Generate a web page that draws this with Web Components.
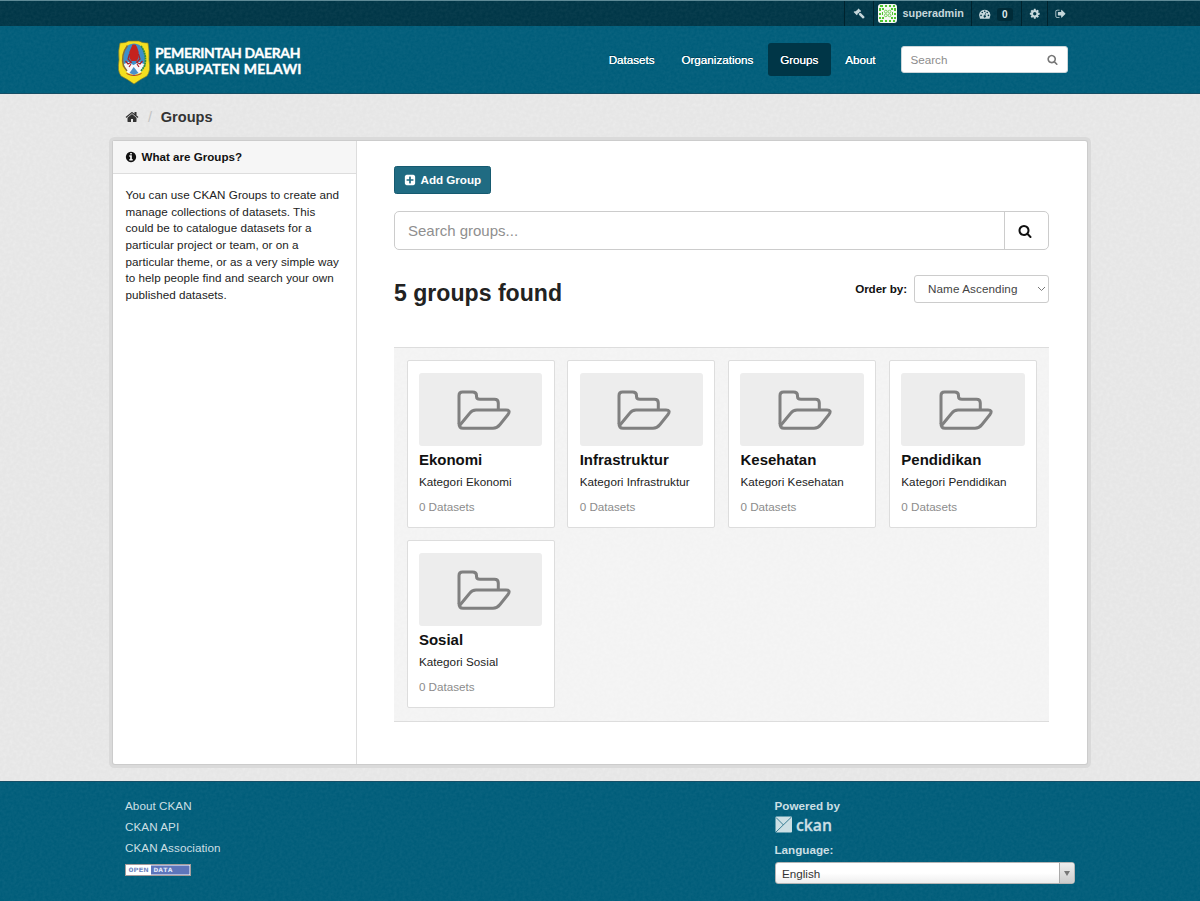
<!DOCTYPE html>
<html lang="en">
<head>
<meta charset="utf-8">
<title>Groups - CKAN</title>
<style>
:root{
  --grain:url("data:image/svg+xml,%3Csvg xmlns='http://www.w3.org/2000/svg' width='120' height='120'%3E%3Cfilter id='n' x='0' y='0' width='100%25' height='100%25'%3E%3CfeTurbulence type='fractalNoise' baseFrequency='.35' numOctaves='2' stitchTiles='stitch'/%3E%3CfeColorMatrix values='0 0 0 0 1 0 0 0 0 1 0 0 0 0 1 .35 0 0 0 -.1'/%3E%3C/filter%3E%3Crect width='120' height='120' filter='url(%23n)' opacity='.2'/%3E%3C/svg%3E");
  --speckle:url("data:image/svg+xml,%3Csvg xmlns='http://www.w3.org/2000/svg' width='120' height='120'%3E%3Cfilter id='n' x='0' y='0' width='100%25' height='100%25'%3E%3CfeTurbulence type='fractalNoise' baseFrequency='.3' numOctaves='2' stitchTiles='stitch'/%3E%3CfeColorMatrix values='0 0 0 0 1 0 0 0 0 1 0 0 0 0 1 1.4 0 0 0 -.5'/%3E%3C/filter%3E%3Crect width='120' height='120' filter='url(%23n)' opacity='.28'/%3E%3C/svg%3E");
}
body{margin:0;background:#005d7a;font:11.667px/16.667px "Liberation Sans",Arial,sans-serif;color:#111}
</style>
</head>
<body>
<ckan-page></ckan-page>
<script>
const ICONS = {
  search:'M1216 832q0-185-131.5-316.5t-316.5-131.5-316.5 131.5-131.5 316.5 131.5 316.5 316.5 131.5 316.5-131.5 131.5-316.5zm512 832q0 52-38 90t-90 38q-54 0-90-38l-343-342q-179 124-399 124-143 0-273.5-55.5t-225-150-150-225-55.5-273.5 55.5-273.5 150-225 225-150 273.5-55.5 273.5 55.5 225 150 150 225 55.5 273.5q0 220-124 399l343 343q37 37 37 90z',
  home:'M1472 992v480q0 26-19 45t-45 19h-384v-384h-256v384h-384q-26 0-45-19t-19-45v-480q0-1 .5-3t.5-3l575-474 575 474q1 2 1 6zm223-69l-62 74q-8 9-21 11h-3q-13 0-21-7l-692-577-692 577q-12 8-24 7-13-2-21-11l-62-74q-8-10-7-23.5t11-21.5l719-599q32-26 76-26t76 26l244 204v-195q0-14 9-23t23-9h192q14 0 23 9t9 23v408l219 182q10 8 11 21.5t-7 23.5z',
  info:'M1152 1376v-160q0-14-9-23t-23-9h-96v-512q0-14-9-23t-23-9h-320q-14 0-23 9t-9 23v160q0 14 9 23t23 9h96v320h-96q-14 0-23 9t-9 23v160q0 14 9 23t23 9h448q14 0 23-9t9-23zm-128-896v-160q0-14-9-23t-23-9h-192q-14 0-23 9t-9 23v160q0 14 9 23t23 9h192q14 0 23-9t9-23zm640 416q0 209-103 385.5t-279.5 279.5-385.5 103-385.5-103-279.5-279.5-103-385.5 103-385.5 279.5-279.5 385.5-103 385.5 103 279.5 279.5 103 385.5z',
  plus:'M1408 960v-128q0-26-19-45t-45-19h-320v-320q0-26-19-45t-45-19h-128q-26 0-45 19t-19 45v320h-320q-26 0-45 19t-19 45v128q0 26 19 45t45 19h320v320q0 26 19 45t45 19h128q26 0 45-19t19-45v-320h320q26 0 45-19t19-45zm256-544v960q0 119-84.5 203.5t-203.5 84.5h-960q-119 0-203.5-84.5t-84.5-203.5v-960q0-119 84.5-203.5t203.5-84.5h960q119 0 203.5 84.5t84.5 203.5z',
  cog:'M1152 896q0-106-75-181t-181-75-181 75-75 181 75 181 181 75 181-75 75-181zm512-109v222q0 12-8 23t-20 13l-185 28q-19 54-39 91 35 50 107 138 10 12 10 25t-9 23q-27 37-99 108t-94 71q-12 0-26-9l-138-108q-44 23-91 38-16 136-29 186-7 28-36 28h-222q-14 0-24.5-8.5t-11.5-21.5l-28-184q-49-16-90-37l-141 107q-10 9-25 9-14 0-25-11-126-114-165-168-7-10-7-23 0-12 8-23 15-21 51-66.5t54-70.5q-27-50-41-99l-183-27q-13-2-21-12.5t-8-23.5v-222q0-12 8-23t19-13l186-28q14-46 39-92-40-57-107-138-10-12-10-24 0-10 9-23 26-36 98.5-107.5t94.5-71.5q13 0 26 10l138 107q44-23 91-38 16-136 29-186 7-28 36-28h222q14 0 24.5 8.5t11.5 21.5l28 184q49 16 90 37l142-107q9-9 24-9 13 0 25 10 129 119 165 170 7 8 7 22 0 12-8 23-15 21-51 66.5t-54 70.5q26 50 41 98l183 28q13 2 21 12.5t8 23.5z',
  exit:'M704 1440q0 4 1 20t.5 26.5-3 23.5-10 19.5-20.5 6.5h-320q-119 0-203.5-84.5t-84.5-203.5v-704q0-119 84.5-203.5t203.5-84.5h320q13 0 22.5 9.5t9.5 22.5q0 4 1 20t.5 26.5-3 23.5-10 19.5-20.5 6.5h-320q-66 0-113 47t-47 113v704q0 66 47 113t113 47h312l11.5 1 11.5 3 8 5.5 7 9 2 13.5zm928-544q0 26-19 45l-544 544q-19 19-45 19t-45-19-19-45v-288h-448q-26 0-45-19t-19-45v-384q0-26 19-45t45-19h448v-288q0-26 19-45t45-19 45 19l544 544q19 19 19 45z',
  gavel:'M850 60 1270 480 1140 610 1070 580 940 710 1070 840 1170 740 1760 1330Q1830 1420 1760 1500L1650 1610Q1560 1680 1470 1610L880 1020 970 920 840 790 690 940 720 1010 590 1140 90 640 220 510 320 550 740 270 720 190Z',
  gauge:'M896 256A896 896 0 0 0 140 1630Q160 1664 200 1664H1592Q1632 1664 1652 1630A896 896 0 0 0 896 256ZM320 1024a128 128 0 1 1 0 256 128 128 0 0 1 0-256ZM512 576a128 128 0 1 1 0 256 128 128 0 0 1 0-256ZM896 384a128 128 0 1 1 0 256 128 128 0 0 1 0-256ZM1280 576a128 128 0 1 1 0 256 128 128 0 0 1 0-256ZM1472 1024a128 128 0 1 1 0 256 128 128 0 0 1 0-256ZM980 730 1070 755 985 1140A190 190 0 1 1 870 1115Z'
};

function define(name, css, html){
  customElements.define(name, class extends HTMLElement{
    constructor(){
      super();
      const t = document.createElement('template');
      const body = typeof html === 'function' ? html(this) : html;
      t.innerHTML = `<style>*{box-sizing:border-box}${css}</style>${body}`;
      this.attachShadow({mode:'open'}).append(t.content.cloneNode(true));
    }
  });
}

define('fa-icon', `:host{display:inline-block;flex:none;width:12px;height:12px}svg{display:block;width:100%;height:100%;fill:currentColor;overflow:visible}`,
  el => `<svg viewBox="0 0 1792 1792"><path fill-rule="evenodd" d="${ICONS[el.getAttribute('name')]}"/></svg>`);

define('account-bar', `
:host{display:flex;height:26px;background:var(--grain),#003647;border-top:1px solid #5f8b97;justify-content:flex-end;padding-right:127px;color:#c6d7db;font-weight:bold;font-size:10.83px}
div{display:flex;align-items:center;height:25px;border-left:1px solid #00232e;padding:0 8px}
.a{width:29px}.u{width:98px;padding:0 0 0 4px;gap:6px}.g{width:50px;padding-left:7px;gap:7px}.c{width:26.500px;padding-left:7px}.o{width:26px;padding-left:7px}
fa-icon{width:11.500px;height:11.500px}
.av{display:block;width:19px;height:19px;border-radius:3px;background:#f4f8f0}
.n{background:#002b38;border-radius:3px;width:16px;height:13px;line-height:14px;margin-top:1px;text-align:center;color:#dfe9eb;font-size:10px}`,
`<div class="a"><fa-icon name="gavel"></fa-icon></div>
<div class="u"><svg class="av" viewBox="0 0 19 19"><g fill="#4fc62f"><path d="M2 1h3v2H2zM7 1h2v2H7zM11 1h2v2h-2zM15 1h2v2h-2zM1 4h2v3H1zM16 4h2v3h-2zM4 4h2v2H4zM13 4h2v2h-2zM1 9h2v2H1zM16 9h2v2h-2zM1 13h2v2H1zM16 13h2v2h-2zM4 13h2v2H4zM13 13h2v2h-2zM2 16h3v2H2zM7 16h2v2H7zM11 16h2v2h-2zM15 16h2v2h-2zM4 8h1v3H4zM14 8h1v3h-1z"/></g><g fill="none" stroke="#68c94d" stroke-width=".9"><circle cx="7.8" cy="7.6" r="1.4"/><circle cx="11.5" cy="7.6" r="1.4"/><circle cx="7.8" cy="11.3" r="1.4"/><circle cx="11.5" cy="11.3" r="1.4"/></g></svg><span>superadmin</span></div>
<div class="g"><fa-icon name="gauge"></fa-icon><span class="n">0</span></div>
<div class="c"><fa-icon name="cog"></fa-icon></div>
<div class="o"><fa-icon name="exit"></fa-icon></div>`);

define('site-logo', `:host{display:block;width:190px;height:46px}svg{display:block}text{font-family:Lato,sans-serif;font-weight:700;font-size:14px;fill:#fff;stroke:#fff;stroke-width:.35px}`,
`<svg width="190" height="46" viewBox="117 39 190 46">
<path d="M120 43Q126 43 128.500 41H139Q142 43 148 43Q149.500 50 149 60Q151 71 147 76Q141 79 134 84Q127 79 121 76Q117 71 119 60Q118 50 120 43Z" fill="#f5df1f" stroke="#7d7a2e" stroke-width=".7"/>
<path d="M134 43.500C142 44 145 50 145 59C145 69 141 73 134 74.500C127 73 123 69 123 59C123 50 126 44 134 43.500Z" fill="#3c8fca"/>
<path d="M124 64 128.500 62 133.500 65 139 62 144 64Q143 71 140 73L134 75 128 73Q125 71 124 64Z" fill="#f7f7fa"/>
<path d="M129.500 73 133.700 67 138.500 73 134 75Z" fill="#4a8fc7"/>
<path d="M131.500 47 132.500 44.500H135.500L137 47 138.700 52 138.500 58 136.500 61H131.500L129.500 58 129.300 52Z" fill="#c5221e"/>
<path d="M129.500 54 128 59 131 62M138.500 54 140 59 137 62M125.500 61 128 64 132 62M142.500 61 140 64 136 62M129 67 131 64M139 67 137 64" stroke="#ad2026" stroke-width="1.200" fill="none"/>
<path d="M127.500 45.500Q120.500 55 123.500 66L127 71" stroke="#8b6e35" stroke-width="1.500" fill="none"/>
<path d="M141 46Q147.500 55 144.500 66L141 71" stroke="#328c42" stroke-width="1.800" stroke-dasharray="2 .5" fill="none"/>
<path d="M126.500 73.500Q134 77.500 141.500 73.500" stroke="#b03a2b" stroke-width="1" fill="none"/>
<text x="155" y="57.500" textLength="145.500">PEMERINTAH DAERAH</text>
<text x="155" y="73.500" textLength="146.500">KABUPATEN MELAWI</text>
</svg>`);

define('site-header', `
:host{display:flex;height:68px;background:var(--grain),#005d7a;border-bottom:1px solid #154f66;padding:13px 132px 0 117px;justify-content:space-between}
.r{display:flex;align-items:flex-start;padding-top:4px}
a{color:#fff;height:33px;line-height:33px;padding:0 12.400px;border-radius:3px;margin-right:2px;text-shadow:0 0 .6px #fff,0 -1px 0 rgba(0,0,0,.35)}
a.on{background:#003647}
.s{display:flex;align-items:center;justify-content:space-between;margin:3px 0 0 11px;width:167px;height:27px;background:#fff;border:1px solid #ccd6da;border-radius:3px;padding:0 9px 0 8.500px;color:#8c8c8c}
.s span{position:relative;top:.5px}
fa-icon{width:11px;height:11px;color:#777}`,
`<site-logo></site-logo><div class="r"><a>Datasets</a><a>Organizations</a><a class="on">Groups</a><a>About</a><div class="s"><span>Search</span><fa-icon name="search"></fa-icon></div></div>`);

define('bread-crumb', `
:host{display:flex;align-items:center;height:46px;padding-left:125px;font-size:14.600px;font-weight:bold;color:#333}
fa-icon{width:14px;height:14px}i{font-style:normal;font-weight:normal;color:#c4c4c4;margin:0 8.700px 0 9px}`,
`<fa-icon name="home"></fa-icon><i>/</i><span>Groups</span>`);

define('side-bar', `
:host{box-sizing:border-box;display:block;flex:none;width:244px;border-right:1px solid #ddd}
h2{display:flex;align-items:center;gap:4.500px;margin:0;height:33px;padding-left:12px;background:#f6f6f6;border-bottom:1px solid #ddd;font-size:11.600px;color:#111}
p{margin:13px 12px 0 12.500px;color:#222;white-space:nowrap;letter-spacing:.04px}`,
`<h2><fa-icon name="info"></fa-icon><span>What are Groups?</span></h2>
<p>You can use CKAN Groups to create and<br>manage collections of datasets. This<br>could be to catalogue datasets for a<br>particular project or team, or on a<br>particular theme, or as a very simple way<br>to help people find and search your own<br>published datasets.</p>`);

define('group-card', `
:host{box-sizing:border-box;display:block;height:168px;background:#fff;border:1px solid #ddd;border-radius:2px;padding:11.500px 11.400px}
.i{display:flex;height:73.500px;background:#ededed;border-radius:3px;align-items:center;justify-content:center;padding-left:6px}
h3{margin:4px 0 0;font-size:15px;line-height:20px;color:#111}
p{margin:2.500px 0 0;line-height:17px;color:#222;letter-spacing:.05px}
small{display:block;margin-top:8px;font-size:11.667px;line-height:17px;color:#8c8c8c}`,
`<div class="i"><svg width="54" height="42" viewBox="0 0 54 42" fill="none" stroke="#808080" stroke-width="3" stroke-linejoin="round"><path d="M2 35V6.500Q2 3 5.500 3H15.500Q19.500 3 19.500 6.500V7.500Q19.500 10.300 23 10.300H37.500Q41.300 10.300 41.300 14V21"/><path d="M3 36 12.500 24.500Q15 21 19 21H49Q54 21 51 25.500L43 35.500Q40 39.300 36 39.300H6Q2 39.300 2 34.500"/></svg></div>
<h3><slot></slot></h3><p>Kategori <slot name="kind"></slot></p><small>0 Datasets</small>`);

define('group-list', `
:host{box-sizing:border-box;display:grid;grid-template-columns:repeat(4,148px);column-gap:12.800px;row-gap:12px;align-content:start;height:375px;padding:12.400px 12.500px;border:solid #ddd;border-width:1px 0;background:var(--speckle),#f3f3f3}`,
['Ekonomi','Infrastruktur','Kesehatan','Pendidikan','Sosial'].map(n=>`<group-card>${n}<span slot="kind">${n}</span></group-card>`).join(''));

define('group-main', `
:host{box-sizing:border-box;display:block;padding:25px 38px 0 37px;flex:none;width:730px}
.b{display:inline-flex;align-items:center;gap:4.500px;height:28px;width:97px;padding-left:9px;background:#206b82;border:1px solid #165a70;border-radius:2.500px;color:#fff;font-weight:bold;letter-spacing:-.03px}
.s{display:flex;height:39px;margin-top:17px;border:1px solid #ccc;border-radius:5px;font-size:15px;line-height:37px;color:#8f8f8f}
.s span{flex:1;padding-left:13px}.s div{width:44px;border-left:1px solid #ccc;display:flex;align-items:center;padding-left:13px;color:#111}
.s fa-icon{width:14px;height:14px}
.h{display:flex;align-items:center;height:28px;margin:25px 0 44px}
h1{margin:8px auto 0 0;font-size:23.100px;line-height:30px;color:#222}
b{margin-right:7px;color:#111;letter-spacing:-.07px}
.o{display:flex;align-items:center;justify-content:space-between;width:135px;height:28px;border:1px solid #ccc;border-radius:3px;padding:0 2px 0 13px;color:#444;letter-spacing:.1px}
.w{display:flex}`,
`<div class="w"><div class="b"><fa-icon name="plus"></fa-icon><span>Add Group</span></div></div>
<div class="s"><span>Search groups...</span><div><fa-icon name="search"></fa-icon></div></div>
<div class="h"><h1>5 groups found</h1><b>Order by:</b><div class="o"><span>Name Ascending</span><svg width="9" height="6" viewBox="0 0 9 6" fill="none" stroke="#777"><path d="M1 1l3.500 3.500L8 1"/></svg></div></div>
<group-list></group-list>`);

define('site-footer', `
:host{display:flex;height:120px;background:var(--grain),#005d7a;border-top:1px solid #154f66;padding:13px 125px 0 125px;justify-content:space-between;color:#ccdfe4}
a{display:block;line-height:21px;letter-spacing:.06px}
.l svg{display:block;margin-top:6px}.r{width:300.500px;padding-top:2px}
.r b{display:block;line-height:17px}
.r>svg{display:block;margin:0 0 5px}
text{font-family:"DejaVu Sans Mono",monospace;font-weight:bold;font-size:6px}
.r text{font-family:"Open Sans",sans-serif;font-weight:600;font-size:17px;fill:#ccdfe4;stroke:#ccdfe4;stroke-width:.3px}
.s{display:flex;height:22px;margin-top:4.400px;border:1px solid #b5b5b5;border-radius:3px;background:linear-gradient(#fff 50%,#eee);color:#333;line-height:21px;padding-left:6.500px;justify-content:space-between}
.s i{display:flex;align-items:center;justify-content:center;width:15px;border-left:1px solid #aaa;border-radius:0 2px 2px 0;background:linear-gradient(#eee,#ccc)}`,
`<div class="l"><a>About CKAN</a><a>CKAN API</a><a>CKAN Association</a>
<svg width="67" height="12" viewBox="0 0 67 12"><rect x=".5" y=".5" width="65" height="11" fill="#fff" stroke="#a69c9c"/><path d="M26 1.500h38.500v9H26z" fill="#5d75bb"/><text x="3.500" y="8" fill="#6d83bf" textLength="20" lengthAdjust="spacingAndGlyphs">OPEN</text><text x="28.500" y="8" fill="#e3eafc" textLength="19" lengthAdjust="spacingAndGlyphs">DATA</text></svg></div>
<div class="r"><b>Powered by</b>
<svg width="64" height="22" viewBox="0 -1.500 64 22" overflow="visible"><rect x=".5" y="1" width="16.500" height="16" rx="1" fill="#ccdfe4"/><path d="M1 2 8.500 9.500M1 16.500 16.500 1.500" stroke="#3a7f95" stroke-width="1" fill="none"/><text x="21" y="15" textLength="36" lengthAdjust="spacingAndGlyphs">ckan</text></svg>
<b>Language:</b><div class="s"><span>English</span><i><svg width="6" height="5"><path d="M0 0h6L3 5z" fill="#777"/></svg></i></div></div>`);

define('ckan-page', `
:host{display:block;width:1200px;height:901px;overflow:hidden}
.m{height:687px;background:var(--speckle),#e6e6e6}
.w{display:flex;width:974px;margin:1px 0 0 113px;height:622.500px;background:#fff;border-radius:2px;box-shadow:0 0 0 1px #ccc,0 0 0 4px #dadada}`,
`<account-bar></account-bar><site-header></site-header><div class="m"><bread-crumb></bread-crumb><div class="w"><side-bar></side-bar><group-main></group-main></div></div><site-footer></site-footer>`);
</script>
</body>
</html>
